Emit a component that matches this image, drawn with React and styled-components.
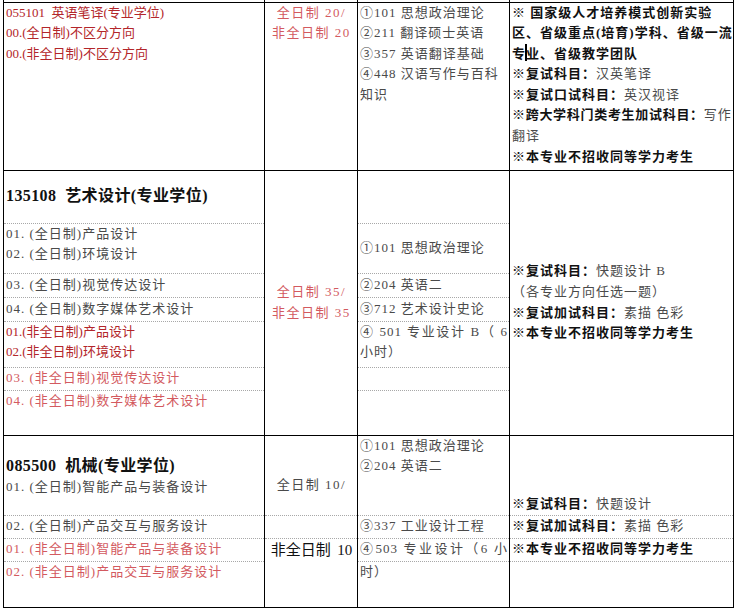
import React from 'react';
import styled, { createGlobalStyle } from 'styled-components';

const GlobalStyle = createGlobalStyle`
  html, body {
    margin: 0;
    padding: 0;
    background: #fff;
  }
`;

const tones = {
  red: '#b3262a',
  pink: '#d35a60',
  gray: '#4a4a4a',
  black: '#111',
};

const Page = styled.div`
  width: 739px;
  height: 612px;
  overflow: hidden;
  background: #fff;
`;

const Table = styled.table`
  border-collapse: collapse;
  table-layout: fixed;
  width: 730px;
  margin-left: 3px;
  font-family: 'Liberation Serif', 'Noto Sans CJK SC', serif;
  font-size: 13px;
  line-height: 20.6px;
  color: ${tones.gray};
`;

const Row = styled.tr`
  height: ${(p) => p.$h}px;
`;

const Cell = styled.td`
  padding: 0 1px 0 2px;
  border-left: 1px solid #000;
  border-right: 1px solid #000;
  border-top: ${(p) =>
    p.$top === 'solid' ? '1px solid #000' : p.$top === 'dotted' ? '1px dotted #a8a8a8' : 'none'};
  border-bottom: ${(p) => (p.$last ? '1px solid #000' : 'none')};
  vertical-align: ${(p) => p.$v || 'top'};
  text-align: ${(p) => p.$align || 'left'};
  overflow: hidden;
`;

const Line = styled.div`
  white-space: nowrap;
  color: ${(p) => tones[p.$tone || 'gray']};
  font-weight: ${(p) => (p.$bold ? 700 : 400)};
  font-size: ${(p) => p.$size || 13}px;
  letter-spacing: ${(p) => (p.$ls !== undefined ? p.$ls : 0)}px;
  text-align: ${(p) => (p.$justify ? 'justify' : 'inherit')};
  text-align-last: ${(p) => (p.$justify ? 'justify' : 'auto')};
  font-family: ${(p) => (p.$sans ? "'Noto Sans CJK SC', sans-serif" : 'inherit')};
  padding-top: ${(p) => p.$pt || 0}px;
`;

const Strong = styled.span`
  font-weight: 700;
  color: ${tones.black};
`;

const Plain = styled.span`
  font-weight: 400;
  color: ${tones.gray};
  letter-spacing: 1px;
`;

const Digits = styled.span`
  font-family: 'Liberation Serif', serif;
`;

const Caret = styled.span`
  display: inline-block;
  width: 2px;
  height: 17px;
  background: #000;
  vertical-align: -3px;
  margin: 0 -1px;
`;

const Note = ({ label, value, ls = 1 }) => (
  <Line $bold $tone="black" $ls={ls}>
    <Strong>{label}</Strong>
    {value && <Plain>{value}</Plain>}
  </Line>
);

const Spacer = () => (
  <Row $h={2}>
    <Cell />
    <Cell />
    <Cell />
    <Cell />
  </Row>
);

export default function App() {
  return (
    <Page>
      <GlobalStyle />
      <Table>
        <colgroup>
          <col style={{ width: 261 }} />
          <col style={{ width: 93 }} />
          <col style={{ width: 152 }} />
          <col style={{ width: 224 }} />
        </colgroup>
        <tbody>
          <Spacer />

          {/* 055101 英语笔译 */}
          <Row $h={168}>
            <Cell $top="solid">
              <Line $tone="red">055101&nbsp;&nbsp;英语笔译(专业学位)</Line>
              <Line $tone="red">00.(全日制)不区分方向</Line>
              <Line $tone="red">00.(非全日制)不区分方向</Line>
            </Cell>
            <Cell $top="solid" $align="center">
              <Line $tone="pink" $ls={1.5}>全日制 20/</Line>
              <Line $tone="pink" $ls={1.5}>非全日制 20</Line>
            </Cell>
            <Cell $top="solid">
              <Line $ls={1}>①101 思想政治理论</Line>
              <Line $ls={1}>②211 翻译硕士英语</Line>
              <Line $ls={1}>③357 英语翻译基础</Line>
              <Line $ls={1}>④448 汉语写作与百科</Line>
              <Line $ls={1}>知识</Line>
            </Cell>
            <Cell $top="solid">
              <Note label="※ 国家级人才培养模式创新实验" />
              <Line $bold $tone="black" $ls={1} $justify>
                区、省级重点(培育)学科、省级一流
              </Line>
              <Line $bold $tone="black" $ls={1}>
                专<Caret />业、省级教学团队
              </Line>
              <Note label="※复试科目：" value="汉英笔译" />
              <Note label="※复试口试科目：" value="英汉视译" />
              <Note label="※跨大学科门类考生加试科目：" value="写作" ls={0.7} />
              <Line $ls={1}>翻译</Line>
              <Note label="※本专业不招收同等学力考生" />
            </Cell>
          </Row>

          {/* 135108 艺术设计 */}
          <Row $h={53}>
            <Cell $top="solid" $v="middle">
              <Line $bold $tone="black" $size={16} $ls={0.4}>
                135108&nbsp;&nbsp;艺术设计(专业学位)
              </Line>
            </Cell>
            <Cell $top="solid" rowSpan={7} $v="middle" $align="center">
              <Line $tone="pink" $ls={1.5}>全日制 35/</Line>
              <Line $tone="pink" $ls={1.5}>非全日制 35</Line>
            </Cell>
            <Cell $top="solid" />
            <Cell $top="solid" rowSpan={7} $v="middle">
              <Note label="※复试科目：" value="快题设计 B" />
              <Line $ls={1}>（各专业方向任选一题）</Line>
              <Note label="※复试加试科目：" value="素描 色彩" />
              <Note label="※本专业不招收同等学力考生" />
            </Cell>
          </Row>
          <Row $h={50}>
            <Cell $top="dotted">
              <Line $ls={1}>01. (全日制)产品设计</Line>
              <Line $ls={1}>02. (全日制)环境设计</Line>
            </Cell>
            <Cell $top="dotted" $v="middle">
              <Line $ls={1}>①101 思想政治理论</Line>
            </Cell>
          </Row>
          <Row $h={24}>
            <Cell $top="dotted" $v="middle">
              <Line $ls={1}>03. (全日制)视觉传达设计</Line>
            </Cell>
            <Cell $top="dotted" $v="middle">
              <Line $ls={1}>②204 英语二</Line>
            </Cell>
          </Row>
          <Row $h={24}>
            <Cell $top="dotted" $v="middle">
              <Line $ls={1}>04. (全日制)数字媒体艺术设计</Line>
            </Cell>
            <Cell $top="dotted" $v="middle">
              <Line $ls={1}>③712 艺术设计史论</Line>
            </Cell>
          </Row>
          <Row $h={46}>
            <Cell $top="dotted">
              <Line $tone="red">01.(非全日制)产品设计</Line>
              <Line $tone="red">02.(非全日制)环境设计</Line>
            </Cell>
            <Cell $top="dotted">
              <Line $ls={1} $justify>
                ④ 501 专业设计 B（ 6
              </Line>
              <Line $ls={1}>小时）</Line>
            </Cell>
          </Row>
          <Row $h={23}>
            <Cell $top="dotted" $v="middle">
              <Line $tone="pink" $ls={1}>03. (非全日制)视觉传达设计</Line>
            </Cell>
            <Cell $top="dotted" />
          </Row>
          <Row $h={45}>
            <Cell $top="dotted">
              <Line $tone="pink" $ls={1}>04. (非全日制)数字媒体艺术设计</Line>
            </Cell>
            <Cell $top="dotted" />
          </Row>

          {/* 085500 机械 */}
          <Row $h={80}>
            <Cell $top="solid" $v="middle">
              <Line $bold $tone="black" $size={16} $ls={0.4} $pt={4}>
                085500&nbsp;&nbsp;机械(专业学位)
              </Line>
              <Line $ls={1}>01. (全日制)智能产品与装备设计</Line>
            </Cell>
            <Cell $top="solid" $v="middle" $align="center">
              <Line $ls={1.5} $pt={20}>全日制 10/</Line>
            </Cell>
            <Cell $top="solid">
              <Line $ls={1}>①101 思想政治理论</Line>
              <Line $ls={1}>②204 英语二</Line>
            </Cell>
            <Cell $top="solid" $v="bottom">
              <Note label="※复试科目：" value="快题设计" />
            </Cell>
          </Row>
          <Row $h={23}>
            <Cell $top="dotted" $v="middle">
              <Line $ls={1}>02. (全日制)产品交互与服务设计</Line>
            </Cell>
            <Cell $top="dotted" />
            <Cell $top="dotted" $v="middle">
              <Line $ls={1}>③337 工业设计工程</Line>
            </Cell>
            <Cell $top="dotted" $v="middle">
              <Note label="※复试加试科目：" value="素描 色彩" />
            </Cell>
          </Row>
          <Row $h={23}>
            <Cell $top="dotted" $v="middle">
              <Line $tone="pink" $ls={1}>01. (非全日制)智能产品与装备设计</Line>
            </Cell>
            <Cell $top="dotted" rowSpan={2} $last $align="center">
              <Line $tone="black" $size={15} $sans>
                非全日制&nbsp;&nbsp;<Digits>10</Digits>
              </Line>
            </Cell>
            <Cell $top="dotted" $v="middle">
              <Line $ls={1} $justify>
                ④503 专业设计（6 小
              </Line>
            </Cell>
            <Cell $top="dotted" $v="middle">
              <Note label="※本专业不招收同等学力考生" />
            </Cell>
          </Row>
          <Row $h={46}>
            <Cell $top="dotted" $last>
              <Line $tone="pink" $ls={1}>02. (非全日制)产品交互与服务设计</Line>
            </Cell>
            <Cell $top="dotted" $last>
              <Line $ls={1}>时）</Line>
            </Cell>
            <Cell $top="dotted" $last />
          </Row>
        </tbody>
      </Table>
    </Page>
  );
}
